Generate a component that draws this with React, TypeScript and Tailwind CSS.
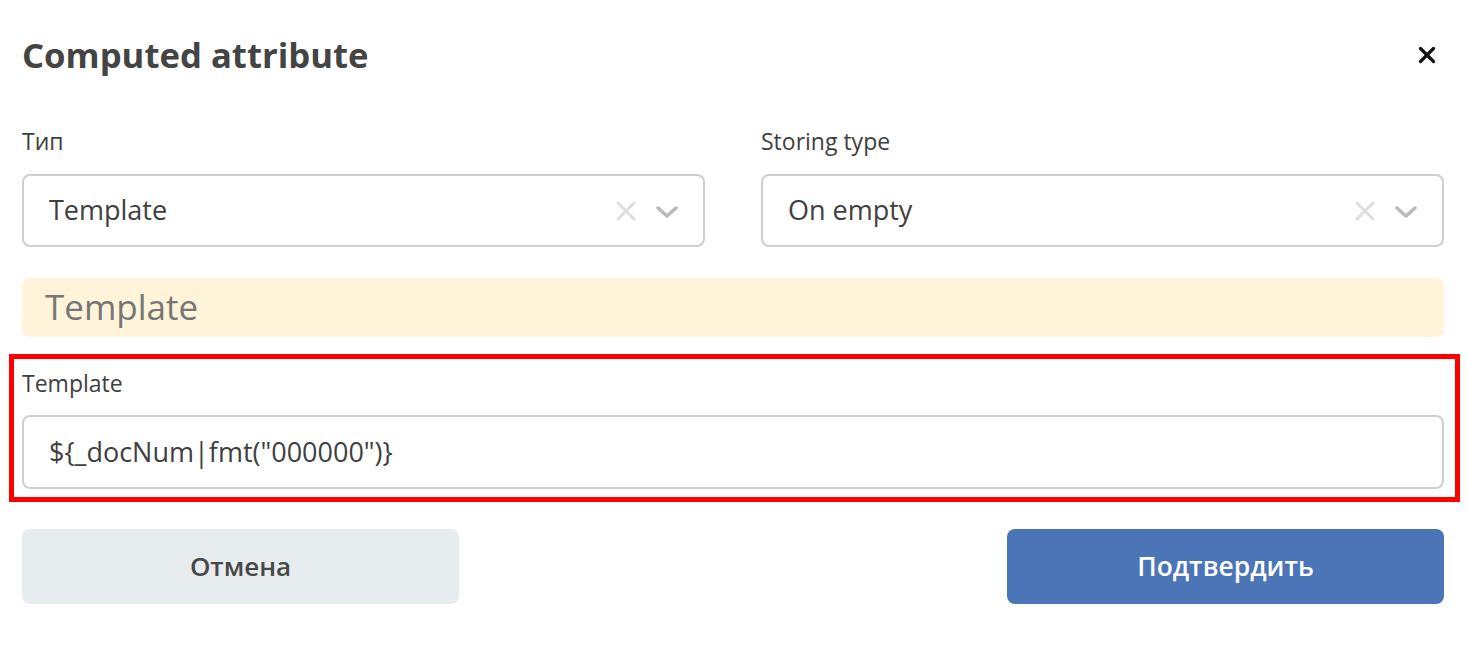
import { X } from "lucide-react"

const font = { fontFamily: '"Open Sans", "Noto Sans", sans-serif' }

function ClearIcon() {
  return (
    <svg width="24" height="24" viewBox="0 0 24 24" fill="none" stroke="#dedede" strokeWidth="3" strokeLinecap="round">
      <path d="M4 4 L20 20 M20 4 L4 20" />
    </svg>
  )
}

function ChevronIcon() {
  return (
    <svg width="24" height="24" viewBox="0 0 24 24" fill="none" stroke="#b9b9b9" strokeWidth="3.5" strokeLinecap="round" strokeLinejoin="round">
      <path d="M3 9 L12 17 L21 9" />
    </svg>
  )
}

function Select({ label, value }: { label: string; value: string }) {
  return (
    <div className="flex flex-col">
      <div className="h-[28px] text-[23px] leading-[28px] text-[#404040]">{label}</div>
      <div className="mt-[19px] flex h-[73px] items-center rounded-[8px] border-2 border-[#cfcfcf] bg-white pl-[25px] pr-[24px]">
        <span className="flex-1 text-[27px] text-[#404040]">{value}</span>
        <div className="flex items-center gap-[17px]">
          <ClearIcon />
          <ChevronIcon />
        </div>
      </div>
    </div>
  )
}

export default function App() {
  return (
    <div className="min-h-[649px] bg-white px-[22px] pr-[23px]" style={font}>
      {/* Header */}
      <div className="flex h-[110px] items-center justify-between">
        <h1 className="text-[34.7px] font-bold text-[#444]">Computed attribute</h1>
        <X size={26} strokeWidth={3} className="mr-[4px] text-[#111]" />
      </div>

      {/* Selects */}
      <div className="mt-[17px] grid grid-cols-2 gap-[56px]">
        <Select label="Тип" value="Template" />
        <Select label="Storing type" value="On empty" />
      </div>

      {/* Section banner */}
      <div className="mt-[31px] flex h-[59px] items-center rounded-[8px] bg-[#fff4d9] px-[23px]">
        <span className="text-[35px] text-[#767676]">Template</span>
      </div>

      {/* Highlighted field */}
      <div className="mt-[17px] ml-[-13px] mr-[-16px] border-[5px] border-[#ff0000] pb-[8px] pl-[8px] pr-[11px] pt-[10px]">
        <div className="h-[28px] text-[23px] leading-[28px] text-[#404040]">Template</div>
        <div className="mt-[18px] flex h-[74px] items-center rounded-[8px] border-2 border-[#cfcfcf] bg-white px-[25px]">
          <span className="text-[27px] text-[#404040]">{'${_docNum|fmt("000000")}'}</span>
        </div>
      </div>

      {/* Actions */}
      <div className="mt-[27px] flex justify-between">
        <button className="h-[75px] w-[437px] rounded-[8px] bg-[#e7ecef] text-[26px] font-semibold text-[#484848]">
          Отмена
        </button>
        <button className="h-[75px] w-[437px] rounded-[8px] bg-[#4b75b7] text-[26.4px] font-semibold text-white">
          Подтвердить
        </button>
      </div>
    </div>
  )
}
